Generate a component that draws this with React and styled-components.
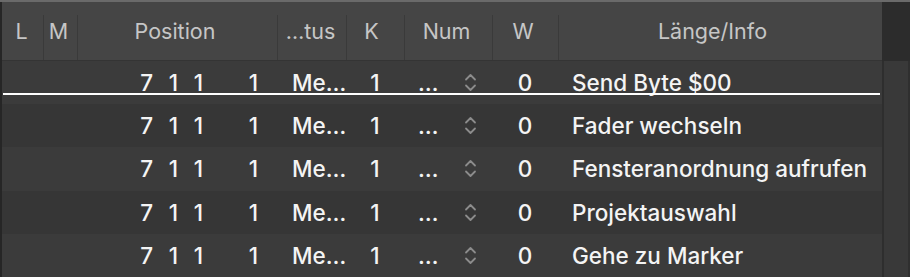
import styled, { createGlobalStyle } from 'styled-components'

const Global = createGlobalStyle`
  html, body {
    margin: 0;
    background: #2a2a2a;
  }
  body {
    font-family: Inter, "Liberation Sans", sans-serif;
    -webkit-font-smoothing: antialiased;
  }
`

const COLS = '41px 34px 200px 69px 58px 88px 66px 324px'

const Frame = styled.div`
  width: 910px;
  height: 277px;
  overflow: hidden;
  box-sizing: border-box;
  border-top: 2px solid #6a6a6a;
  display: flex;
`

const Table = styled.div`
  width: 880px;
  border-left: 2px solid #262626;
  display: flex;
  flex-direction: column;
`

const Head = styled.div`
  height: 58px;
  background: #454545;
  border-bottom: 1px solid #343434;
  display: grid;
  grid-template-columns: ${COLS};
  align-items: end;
`

const HeadCell = styled.div`
  height: 45px;
  box-sizing: border-box;
  padding-bottom: 12px;
  padding-right: ${p => p.$shift || 0}px;
  border-left: ${p => (p.$first ? 'none' : '1px solid #3a3a3a')};
  display: flex;
  align-items: center;
  justify-content: center;
  color: #c6c6c6;
  font-size: 21.5px;
  white-space: nowrap;
`

const Row = styled.div`
  position: relative;
  height: 43.4px;
  background: ${p => (p.$odd ? '#3b3b3b' : '#363636')};
  display: grid;
  grid-template-columns: ${COLS};
  align-items: center;
  color: #f4f4f4;
  font-size: 22.5px;
  font-weight: 500;
  white-space: nowrap;

  ${p => p.$drop && `
    &::after {
      content: '';
      position: absolute;
      left: 1px;
      right: 2px;
      top: 32px;
      height: 2px;
      background: #ffffff;
    }
  `}
`

const Cell = styled.div`
  display: flex;
  align-items: center;
  justify-content: ${p => p.$align || 'flex-start'};
  padding-left: ${p => p.$pad || 0}px;
  overflow: hidden;
`

const Pos = styled.div`
  display: grid;
  grid-template-columns: 76px 25px 25px 55px;
  text-align: right;
`

const Num = styled.div`
  display: flex;
  align-items: center;
  justify-content: space-between;
  padding: 0 15px 0 14px;
`

const Dots = styled.span`
  letter-spacing: 0.5px;
`

const Scroll = styled.div`
  flex: 1;
  display: flex;
  flex-direction: column;
`

const ScrollHead = styled.div`
  height: 59px;
  background: #2c2c2c;
`

const ScrollTrack = styled.div`
  flex: 1;
  background: #393939;
  border-left: 2px solid #2e2e2e;
  border-right: 2px solid #2f2f2f;
`

const Stepper = () => (
  <svg width="13" height="21" viewBox="0 0 13 21" fill="none">
    <path d="M2 7.5 L6.5 3 L11 7.5" stroke="#8c8c8c" strokeWidth="1.8" strokeLinecap="round" strokeLinejoin="round" />
    <path d="M2 13.5 L6.5 18 L11 13.5" stroke="#8c8c8c" strokeWidth="1.8" strokeLinecap="round" strokeLinejoin="round" />
  </svg>
)

const rows = [
  'Send Byte $00',
  'Fader wechseln',
  'Fensteranordnung aufrufen',
  'Projektauswahl',
  'Gehe zu Marker',
]

export default function App() {
  return (
    <>
      <Global />
      <Frame>
        <Table>
          <Head>
            <HeadCell $first $shift={2}>L</HeadCell>
            <HeadCell $shift={4}>M</HeadCell>
            <HeadCell $shift={5}>Position</HeadCell>
            <HeadCell $shift={3}>…tus</HeadCell>
            <HeadCell $shift={8}>K</HeadCell>
            <HeadCell $shift={4}>Num</HeadCell>
            <HeadCell $shift={5}>W</HeadCell>
            <HeadCell $shift={16}>Länge/Info</HeadCell>
          </Head>
          {rows.map((info, i) => (
            <Row key={info} $odd={i % 2 === 0} $drop={i === 0}>
              <Cell />
              <Cell />
              <Pos>
                <span>7</span>
                <span>1</span>
                <span>1</span>
                <span>1</span>
              </Pos>
              <Cell $pad={15}>Me…</Cell>
              <Cell $align="center">1</Cell>
              <Num>
                <Dots>…</Dots>
                <Stepper />
              </Num>
              <Cell $align="center">0</Cell>
              <Cell $pad={14}>{info}</Cell>
            </Row>
          ))}
        </Table>
        <Scroll>
          <ScrollHead />
          <ScrollTrack />
        </Scroll>
      </Frame>
    </>
  )
}
